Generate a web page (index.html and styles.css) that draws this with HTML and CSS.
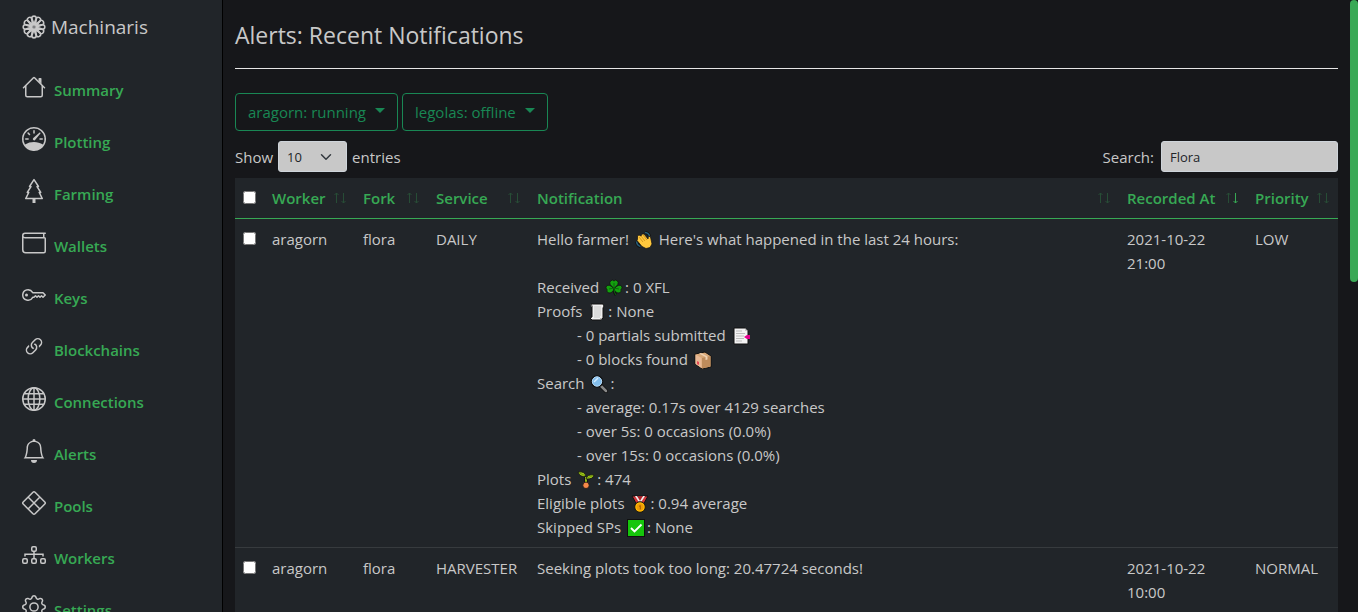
FILE: index.html
```html
<!DOCTYPE html>
<html lang="en">
<head>
<meta charset="utf-8">
<title>Machinaris - Alerts</title>
<link rel="stylesheet" href="styles.css">
</head>
<body>
<svg class="defs" aria-hidden="true">
  <symbol id="up" viewBox="0 0 14 14"><path d="M3.500 12V2M1.500 4 3.500 2l2 2"/></symbol>
  <symbol id="down" viewBox="0 0 14 14"><path d="M10.500 2v10M8.500 10l2 2 2-2"/></symbol>
</svg>
<div class="app">
  <nav class="sidebar">
    <a class="brand" href="#">
      <svg class="icon" viewBox="-8 -8 16 16" fill="none" stroke="currentColor" stroke-width="1.100">
        <g id="p3"><path id="petal" d="M0-1.800-1.600-6.100A1.700 1.700 0 0 1 1.600-6.100Z"/><use href="#petal" transform="rotate(30)"/><use href="#petal" transform="rotate(60)"/></g>
        <use href="#p3" transform="rotate(90)"/><use href="#p3" transform="rotate(180)"/><use href="#p3" transform="rotate(270)"/>
        <circle r="1.900"/>
      </svg>
      Machinaris
    </a>
    <ul class="menu">
      <li><a href="#"><svg class="icon" viewBox="0 0 16 16"><path d="M2 13.500V7h1v6.500a.5.5 0 0 0 .5.5h9a.5.5 0 0 0 .5-.5V7h1v6.500a1.500 1.500 0 0 1-1.500 1.500h-9A1.500 1.500 0 0 1 2 13.500zm11-11V6l-2-2V2.500a.5.5 0 0 1 .5-.5h1a.5.5 0 0 1 .5.5z"/><path d="M7.293 1.500a1 1 0 0 1 1.414 0l6.647 6.646a.5.5 0 0 1-.708.708L8 2.207 1.354 8.854a.5.5 0 1 1-.708-.708L7.293 1.500z"/></svg> <span>Summary</span></a></li>
      <li><a href="#"><svg class="icon" viewBox="0 0 16 16"><path d="M8 2a.5.5 0 0 1 .5.5V4a.5.5 0 0 1-1 0V2.500A.5.5 0 0 1 8 2zM3.732 3.732a.5.5 0 0 1 .707 0l.915.914a.5.5 0 1 1-.708.708l-.914-.915a.5.5 0 0 1 0-.707zM2 8a.5.5 0 0 1 .5-.5h1.586a.5.5 0 0 1 0 1H2.500A.5.5 0 0 1 2 8zm9.500 0a.5.5 0 0 1 .5-.5h1.500a.5.5 0 0 1 0 1H12a.5.5 0 0 1-.5-.5zm.754-4.246a.389.389 0 0 0-.527-.02L7.547 7.310A.91.91 0 1 0 8.850 8.569l3.434-4.297a.389.389 0 0 0-.029-.518z"/><path fill-rule="evenodd" d="M6.664 15.889A8 8 0 1 1 9.336.11a8 8 0 0 1-2.672 15.780zm-4.665-4.283A11.945 11.945 0 0 1 8 10c2.186 0 4.236.585 6.001 1.606a7 7 0 1 0-12.002 0z"/></svg> <span>Plotting</span></a></li>
      <li><a href="#"><svg class="icon" viewBox="0 0 16 16"><path d="M8.416.223a.5.5 0 0 0-.832 0l-3 4.500A.5.5 0 0 0 5 5.500h.098L3.076 8.735A.5.5 0 0 0 3.500 9.500h.191l-1.638 3.276a.5.5 0 0 0 .447.724H7V16h2v-2.500h4.500a.5.5 0 0 0 .447-.724L12.310 9.500h.191a.5.5 0 0 0 .424-.765L10.902 5.500H11a.5.5 0 0 0 .416-.777l-3-4.500zM6.437 4.758A.5.5 0 0 0 6 4.500h-.066L8 1.401 10.066 4.500H10a.5.5 0 0 0-.424.765L11.598 8.500H11.500a.5.5 0 0 0-.447.724L12.690 12.500H3.309l1.638-3.276A.5.5 0 0 0 4.500 8.500h-.098l2.022-3.235a.5.5 0 0 0 .013-.507z"/></svg> <span>Farming</span></a></li>
      <li><a href="#"><svg class="icon" viewBox="0 0 16 16"><path d="M0 3a2 2 0 0 1 2-2h13.500a.5.5 0 0 1 0 1H15v2a1 1 0 0 1 1 1v8.500a1.500 1.500 0 0 1-1.500 1.500h-12A2.500 2.500 0 0 1 0 12.500V3zm1 1.732V12.500A1.500 1.500 0 0 0 2.500 14h12a.5.5 0 0 0 .5-.5V5H2a1.990 1.990 0 0 1-1-.268zM1 3a1 1 0 0 0 1 1h12V2H2a1 1 0 0 0-1 1z"/></svg> <span>Wallets</span></a></li>
      <li><a href="#"><svg class="icon" viewBox="0 0 16 16"><path d="M0 8a4 4 0 0 1 7.465-2H14a.5.5 0 0 1 .354.146l1.500 1.500a.5.5 0 0 1 0 .708l-1.500 1.500a.5.5 0 0 1-.708 0L13 9.207l-.646.647a.5.5 0 0 1-.708 0L11 9.207l-.646.647a.5.5 0 0 1-.708 0L9 9.207l-.646.647A.5.5 0 0 1 8 10h-.535A4 4 0 0 1 0 8zm4-3a3 3 0 1 0 2.712 4.285A.5.5 0 0 1 7.163 9h.63l.853-.854a.5.5 0 0 1 .708 0l.646.647.646-.647a.5.5 0 0 1 .708 0l.646.647.646-.647a.5.5 0 0 1 .708 0l.646.647.793-.793-1-1h-6.630a.5.5 0 0 1-.451-.285A3 3 0 0 0 4 5z"/><path d="M4 8a1 1 0 1 1-2 0 1 1 0 0 1 2 0z"/></svg> <span>Keys</span></a></li>
      <li><a href="#"><svg class="icon" viewBox="0 0 16 16"><path d="M4.715 6.542 3.343 7.914a3 3 0 1 0 4.243 4.243l1.828-1.829A3 3 0 0 0 8.586 5.500L8 6.086a1.002 1.002 0 0 0-.154.199 2 2 0 0 1 .861 3.337L6.880 11.450a2 2 0 1 1-2.830-2.830l.793-.792a4.018 4.018 0 0 1-.128-1.287z"/><path d="M6.586 4.672A3 3 0 0 0 7.414 9.500l.775-.776a2 2 0 0 1-.896-3.346L9.120 3.550a2 2 0 1 1 2.830 2.830l-.793.792c.112.42.155.855.128 1.287l1.372-1.372a3 3 0 1 0-4.243-4.243L6.586 4.672z"/></svg> <span>Blockchains</span></a></li>
      <li><a href="#"><svg class="icon line" viewBox="0 0 16 16"><circle cx="8" cy="8" r="7.500"/><ellipse cx="8" cy="8" rx="3.900" ry="7.500"/><path d="M8 .5v15M.5 8h15M1.500 4.500h13M1.500 11.500h13"/></svg> <span>Connections</span></a></li>
      <li><a href="#"><svg class="icon" viewBox="0 0 16 16"><path d="M8 16a2 2 0 0 0 2-2H6a2 2 0 0 0 2 2zM8 1.918l-.797.161A4.002 4.002 0 0 0 4 6c0 .628-.134 2.197-.459 3.742-.16.767-.376 1.566-.663 2.258h10.244c-.287-.692-.502-1.490-.663-2.258C12.134 8.197 12 6.628 12 6a4.002 4.002 0 0 0-3.203-3.920L8 1.917zM14.220 12c.223.447.481.801.78 1H1c.299-.199.557-.553.78-1C2.680 10.200 3 6.880 3 6c0-2.420 1.720-4.440 4.005-4.901a1 1 0 1 1 1.990 0A5.002 5.002 0 0 1 13 6c0 .88.32 4.200 1.220 6z"/></svg> <span>Alerts</span></a></li>
      <li><a href="#"><svg class="icon line" viewBox="0 0 16 16"><path d="M7.300.8a1 1 0 0 1 1.400 0l6.500 6.500a1 1 0 0 1 0 1.400l-6.500 6.500a1 1 0 0 1-1.400 0L.8 8.700a1 1 0 0 1 0-1.400zM4.200 4.200l7.600 7.600M11.800 4.200l-7.600 7.600"/></svg> <span>Pools</span></a></li>
      <li><a href="#"><svg class="icon line" viewBox="0 0 16 16"><rect x="6.500" y="2.500" width="3" height="3" rx=".8"/><rect x=".5" y="10.500" width="3" height="3" rx=".8"/><rect x="6.500" y="10.500" width="3" height="3" rx=".8"/><rect x="12.500" y="10.500" width="3" height="3" rx=".8"/><path d="M8 5.500v5M2 9V7.500h12V9"/></svg> <span>Workers</span></a></li>
      <li><a href="#"><svg class="icon" viewBox="0 0 16 16"><path d="M8 4.754a3.246 3.246 0 1 0 0 6.492 3.246 3.246 0 0 0 0-6.492zM5.754 8a2.246 2.246 0 1 1 4.492 0 2.246 2.246 0 0 1-4.492 0z"/><path d="M9.796 1.343c-.527-1.790-3.065-1.790-3.592 0l-.094.319a.873.873 0 0 1-1.255.52l-.292-.16c-1.640-.892-3.433.902-2.540 2.541l.159.292a.873.873 0 0 1-.52 1.255l-.319.094c-1.790.527-1.790 3.065 0 3.592l.319.094a.873.873 0 0 1 .52 1.255l-.16.292c-.892 1.640.901 3.434 2.541 2.540l.292-.159a.873.873 0 0 1 1.255.52l.094.319c.527 1.790 3.065 1.790 3.592 0l.094-.319a.873.873 0 0 1 1.255-.52l.292.16c1.640.893 3.434-.902 2.540-2.541l-.159-.292a.873.873 0 0 1 .52-1.255l.319-.094c1.790-.527 1.790-3.065 0-3.592l-.319-.094a.873.873 0 0 1-.52-1.255l.16-.292c.893-1.640-.902-3.433-2.541-2.540l-.292.159a.873.873 0 0 1-1.255-.52l-.094-.319zm-2.633.283c.246-.835 1.428-.835 1.674 0l.094.319a1.873 1.873 0 0 0 2.693 1.115l.291-.16c.764-.415 1.600.42 1.184 1.185l-.159.292a1.873 1.873 0 0 0 1.116 2.692l.318.094c.835.246.835 1.428 0 1.674l-.319.094a1.873 1.873 0 0 0-1.115 2.693l.16.291c.415.764-.42 1.600-1.185 1.184l-.291-.159a1.873 1.873 0 0 0-2.693 1.116l-.094.318c-.246.835-1.428.835-1.674 0l-.094-.319a1.873 1.873 0 0 0-2.692-1.115l-.292.16c-.764.415-1.600-.42-1.184-1.185l.159-.291A1.873 1.873 0 0 0 1.945 8.930l-.319-.094c-.835-.246-.835-1.428 0-1.674l.319-.094A1.873 1.873 0 0 0 3.060 4.377l-.16-.292c-.415-.764.42-1.600 1.185-1.184l.292.159a1.873 1.873 0 0 0 2.692-1.115l.094-.319z"/></svg> <span>Settings</span></a></li>
    </ul>
  </nav>
  <main class="content">
    <h1 class="title">Alerts: Recent Notifications</h1>
    <div class="workers">
      <button class="worker" type="button">aragorn: running</button>
      <button class="worker" type="button">legolas: offline</button>
    </div>
    <div class="controls">
      <label class="control">Show <select class="field length"><option>10</option><option>25</option><option>50</option></select> entries</label>
      <label class="control search">Search: <input class="field query" type="search" value="Flora"></label>
    </div>
    <table class="alerts">
      <colgroup><col class="c-check"><col class="c-worker"><col class="c-fork"><col class="c-service"><col><col class="c-date"><col class="c-priority"></colgroup>
      <thead>
        <tr>
          <th><input type="checkbox" aria-label="Select all"></th>
          <th><div class="head">Worker <svg class="sort"><use href="#up"/><use href="#down"/></svg></div></th>
          <th><div class="head">Fork <svg class="sort"><use href="#up"/><use href="#down"/></svg></div></th>
          <th><div class="head">Service <svg class="sort"><use href="#up"/><use href="#down"/></svg></div></th>
          <th><div class="head">Notification <svg class="sort"><use href="#up"/><use href="#down"/></svg></div></th>
          <th><div class="head">Recorded At <svg class="sort"><use href="#up"/><use class="active" href="#down"/></svg></div></th>
          <th><div class="head">Priority <svg class="sort"><use href="#up"/><use href="#down"/></svg></div></th>
        </tr>
      </thead>
      <tbody>
        <tr>
          <td><input type="checkbox" aria-label="Select alert"></td>
          <td>aragorn</td>
          <td>flora</td>
          <td>DAILY</td>
          <td>
            <p>Hello farmer! <svg class="emoji" viewBox="0 0 18 18"><g stroke="#111" stroke-width="3"><path d="M10 1.500q4 .5 4.500 4M1.500 10.500q.5 4 4 5"/></g><path d="M10 1.500q4 .5 4.500 4M1.500 10.500q.5 4 4 5" fill="none" stroke="#27617c" stroke-width="1.500"/><path d="M2.500 5 4 4l2 1 1-2 2 0 4 5 .5-3 2 1 1.500 7-2 3.500-4 1-4-2-5-6 .5-1z" fill="#ffc83d" stroke="#111" stroke-width=".7"/><path d="m4 6 4 5M6 5l4 5M8 4l4 5" stroke="#c98b18" stroke-width=".8"/></svg> Here's what happened in the last 24 hours:</p>
            <p><br></p>
            <p>Received <svg class="emoji" viewBox="0 0 18 18"><path d="M9 10q0 4 2 6" fill="none" stroke="#111" stroke-width="3"/><path d="M9 9.500Q3 5 5.500 2q2-2 3.500 0 1.500-2 3.500 0Q15 5 9 9.500 14 4.500 16.500 7q1.500 2-.5 3.500 1 3-2 3.500-4 0-5-4.500Q8 14 4 14q-3-.5-2-3.500Q0 9 1.500 7 4 4.500 9 9.500z" fill="#13a10e" stroke="#111" stroke-width=".8"/><path d="M9 9q0 5 2 7M9 9V4M9 9l5 1M9 9l-5 1" fill="none" stroke="#0b6a0b"/></svg>: 0 XFL</p>
            <p>Proofs <svg class="emoji" viewBox="0 0 18 18"><path d="M3 1h12l1 2-1 2v10l-2 2H4l-2-2 2-1V3z" fill="#f0f0f0" stroke="#111"/><path d="M6 4h7M6 6h7M6 8h7M6 10h7M6 12h7M6 14h6" stroke="#bbb" stroke-width=".8"/><path d="M3 1.500 4 4M13 15v2" stroke="#777"/></svg>: None</p>
            <p class="sub">- 0 partials submitted <svg class="emoji" viewBox="0 0 18 18"><path d="M2 1h11l3 3v13H2z" fill="#f3f3f3" stroke="#111"/><path d="M13 1v3h3" fill="#ccc"/><path d="M4 4h6M4 6.500h9M4 9h8M4 11.500h8M4 14h6" stroke="#bbb"/><path d="m12 10 3-2h3v4h-3z" fill="#e3008c"/></svg></p>
            <p class="sub">- 0 blocks found <svg class="emoji" viewBox="0 0 18 18"><path d="M1 3 11 1l6 4v11l-9 2-7-5z" fill="#d8a878" stroke="#111"/><path d="m1.500 3.500 6 3.500v10l-6-4z" fill="#e8b995"/><path d="m8 7 8.500-2v10.500L8 17.500z" fill="#bd8b5b"/><path d="m5 2.500 6.500 3.500v3l2-.5v-3L7 2z" fill="#f0d2b3"/><path d="m3 10 2 1v3l-2-1z" fill="#e74856"/></svg></p>
            <p>Search <svg class="emoji" viewBox="0 0 18 18"><path d="m11 11 5 5" stroke="#111" stroke-width="4" stroke-linecap="round"/><path d="m11 11 5 5" stroke="#888" stroke-width="2.500" stroke-linecap="round"/><circle cx="7" cy="6.500" r="5.500" fill="#83beec" stroke="#111" stroke-width="1.500"/><circle cx="7" cy="6.500" r="4.700" fill="#83beec" stroke="#b5d9f5"/><path d="m4 7 4-4" stroke="#d3ecff" stroke-width="1.500"/></svg>:</p>
            <p class="sub">- average: 0.17s over 4129 searches</p>
            <p class="sub">- over 5s: 0 occasions (0.0%)</p>
            <p class="sub">- over 15s: 0 occasions (0.0%)</p>
            <p>Plots <svg class="emoji" viewBox="0 0 18 18"><path d="M9 6v7" stroke="#111" stroke-width="3.500"/><path d="M9 6v8" stroke="#a4cc1a" stroke-width="1.800"/><path d="M1 1q7-1 8 4.500-6 1-8-4.500zM9 8q1-5 8-4-1 4.500-8 4z" fill="#a4cc1a" stroke="#111" stroke-width=".8"/><path d="M2.500 2 8 4.700M10 7l5-2" stroke="#6b930b" stroke-width=".8"/><circle cx="9" cy="14.300" r="3.200" fill="#f7894a" stroke="#111" stroke-width=".8"/></svg>: 474</p>
            <p>Eligible plots <svg class="emoji" viewBox="0 0 18 18"><path d="M1 1h16l-5 9H6z" fill="#d13438" stroke="#111"/><path d="m4 1 5 8 5-8h-2L9 6 6 1z" fill="#eee"/><path d="M6.500 1h5L9 5z" fill="#a4262c"/><circle cx="9" cy="12" r="5.300" fill="#ffb900" stroke="#111"/><circle cx="9" cy="12" r="3.500" fill="#ee9b08"/><path d="M8 11.500 9.300 10.500v4" fill="none" stroke="#a35c00"/></svg>: 0.94 average</p>
            <p>Skipped SPs <svg class="emoji" viewBox="0 0 18 18"><path d="M0 0h18v18H0z" fill="#111"/><path d="M1 1h16v16H1z" fill="#16c60c"/><path d="m4 9 3.500 3.500L14.500 5.500" fill="none" stroke="#fff" stroke-width="1.800"/></svg>: None</p>
          </td>
          <td>2021-10-22 21:00</td>
          <td>LOW</td>
        </tr>
        <tr>
          <td><input type="checkbox" aria-label="Select alert"></td>
          <td>aragorn</td>
          <td>flora</td>
          <td>HARVESTER</td>
          <td>Seeking plots took too long: 20.47724 seconds!</td>
          <td>2021-10-22 10:00</td>
          <td>NORMAL</td>
        </tr>
      </tbody>
    </table>
  </main>
  <div class="scrollbar"><div class="thumb"></div></div>
</div>
</body>
</html>
```
FILE: styles.css
```css
* { box-sizing: border-box; }
body {
  margin: 0;
  background: #16171a;
  color: #c8c8c8;
  font: 15px/24px "Segoe UI", "Open Sans", sans-serif;
}
p, h1, ul { margin: 0; padding: 0; }
.defs { position: absolute; width: 0; height: 0; }
.app { display: flex; height: 100vh; overflow: hidden; }

.sidebar {
  flex: 0 0 223px;
  overflow: hidden;
  padding: 9px 22px;
  background: #212529;
  border-right: 1px solid #000;
}
.icon { width: 24px; height: 24px; vertical-align: -3px; fill: currentColor; overflow: visible; }
.line { fill: none; stroke: currentColor; }
.brand { display: block; margin-bottom: 19px; color: #c8c8c8; font-size: 19px; line-height: 36px; text-decoration: none; }
.brand .icon { fill: none; vertical-align: -5px; }
.menu { list-style: none; }
.menu a { display: block; height: 52px; padding: 8px 0; color: #c8c8c8; line-height: 36px; text-decoration: none; }
.menu span { margin-left: 4px; color: #37a954; font-weight: 600; }

.content { flex: 1; min-width: 0; padding: 17px 12px 0; }
.title { padding-bottom: 14px; border-bottom: 1px solid #e6e6e6; font-size: 23px; font-weight: 400; line-height: 37px; }
.workers { display: flex; gap: 4px; margin-top: 24px; }
.worker {
  display: flex;
  align-items: center;
  gap: 9px;
  height: 38px;
  padding: 0 12px;
  border: 1px solid #198754;
  border-radius: 4px;
  background: none;
  color: #198754;
  font: inherit;
}
.worker::after { content: ""; margin-bottom: 3px; border: 5px solid transparent; border-top-color: #198754; border-bottom: 0; }
.controls { display: flex; justify-content: space-between; margin: 10px 0 6px; }
.control { display: flex; align-items: center; gap: 5px; }
.search { gap: 7px; }
.field {
  height: 31px;
  padding: 0 8px;
  border: 1px solid #ced4da;
  border-radius: 3px;
  background: #c8c8c8;
  color: #212529;
  font: 13px "Segoe UI", "Open Sans", sans-serif;
  appearance: none;
}
.length {
  width: 69px;
  background: #c8c8c8 url("data:image/svg+xml,%3Csvg xmlns='http://www.w3.org/2000/svg' viewBox='0 0 16 16'%3E%3Cpath fill='none' stroke='%23343a40' stroke-width='2' stroke-linecap='round' stroke-linejoin='round' d='m2 5 6 6 6-6'/%3E%3C/svg%3E") no-repeat right 14px center / 12px 12px;
}
.query { width: 177px; }

.alerts { width: 100%; table-layout: fixed; border-collapse: collapse; background: #212529; }
.c-check { width: 29px; }
.c-worker, .c-priority { width: 91px; }
.c-fork { width: 73px; }
.c-service { width: 101px; }
.c-date { width: 128px; }
th, td { padding: 8px; text-align: left; vertical-align: top; }
th { border-bottom: 1px solid #37a954; color: #37a954; font-weight: 600; }
td { border-bottom: 1px solid #373b3e; }
.alerts input { display: block; width: 13px; height: 13px; margin: 5px 0 0; }
.head { display: flex; align-items: center; justify-content: space-between; white-space: nowrap; }
.sort { flex: none; width: 14px; height: 14px; fill: none; stroke: #37a954; }
.sort use { opacity: .3; }
.sort .active { opacity: 1; }
.sub { padding-left: 40px; }
.emoji { width: 18px; height: 18px; margin: 0 2px; vertical-align: -4px; }

.scrollbar { flex: 0 0 8px; }
.thumb { height: 46%; border-radius: 4px; background: #3aa956; }
```
